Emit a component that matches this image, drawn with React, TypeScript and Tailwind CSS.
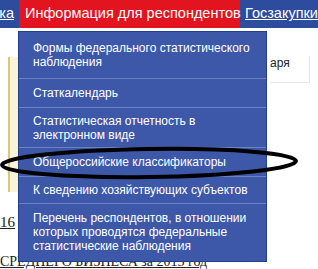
import React from 'react'

const menuItems = [
  { text: 'Формы федерального статистического наблюдения', pad: 'pt-[9px] pb-[9px]' },
  { text: 'Статкалендарь', pad: 'py-[7px]' },
  { text: 'Статистическая отчетность в электронном виде', pad: 'pt-[6px] pb-[5px]' },
  { text: 'Общероссийские классификаторы', pad: 'py-[7px]' },
  { text: 'К сведению хозяйствующих субъектов', pad: 'py-[6px]' },
  {
    text: 'Перечень респондентов, в отношении которых проводятся федеральные статистические наблюдения',
    pad: 'pt-[7px] pb-[8px]',
  },
]

export default function App() {
  return (
    <div className="relative w-[318px] h-[269px] overflow-hidden bg-white font-['Liberation_Sans',Arial,sans-serif]">
      {/* Верхнее меню */}
      <nav className="flex h-[28px] bg-[#2d4c9e] text-[14.5px] text-white">
        <div className="flex w-[19px] items-center justify-end overflow-hidden pr-[5px]">
          <span className="whitespace-nowrap underline">Статистика</span>
        </div>
        <div className="flex w-[221px] items-center bg-[#e2141f] pl-[6px] whitespace-nowrap">
          Информация для респондентов
        </div>
        <div className="flex items-center pl-[5px] whitespace-nowrap">
          <span className="underline">Госзакупки</span>
        </div>
      </nav>

      {/* Содержимое страницы под выпадающим меню */}
      <div className="flex">
        <div className="flex w-[18px] shrink-0 flex-col">
          <div className="mt-[29px] ml-[8px] h-[135px] border-l-2 border-[#d9c978] bg-[#f8f4dc]" />
          <div className="mt-[22px] font-['Liberation_Serif',serif] text-[15px] leading-[17px] text-[#222] underline">
            16
          </div>
          <div className="mt-[22px] whitespace-nowrap font-['Liberation_Serif',serif] text-[14px] leading-[17px] text-[#222] underline">
            СРЕДНЕГО БИЗНЕСА за 2015 год
          </div>
        </div>
        <div className="ml-[252px] flex flex-col">
          <div className="mt-[28px] w-[40px] border-b border-r border-[#e6e6e6] pb-[12px] text-[12px] leading-[14px] text-[#222]">
            аря
          </div>
        </div>
      </div>

      {/* Выпадающее меню */}
      <ul className="absolute left-[18px] top-[31px] w-[249px] border border-[#263e85] bg-[#3d58a8] text-[12px] leading-[14px] text-white">
        {menuItems.map((item, i) => (
          <li
            key={item.text}
            className={`${item.pad} pl-[14px] pr-[10px] ${i > 0 ? 'border-t border-[#6c82c4]' : ''}`}
          >
            {item.text}
          </li>
        ))}
      </ul>

      {/* Обводка от руки */}
      <svg className="pointer-events-none absolute left-0 top-0" width="318" height="269">
        <ellipse
          cx="149"
          cy="163"
          rx="147"
          ry="14"
          fill="none"
          stroke="#000"
          strokeWidth="4"
          transform="rotate(-0.8 149 163)"
        />
      </svg>
    </div>
  )
}
